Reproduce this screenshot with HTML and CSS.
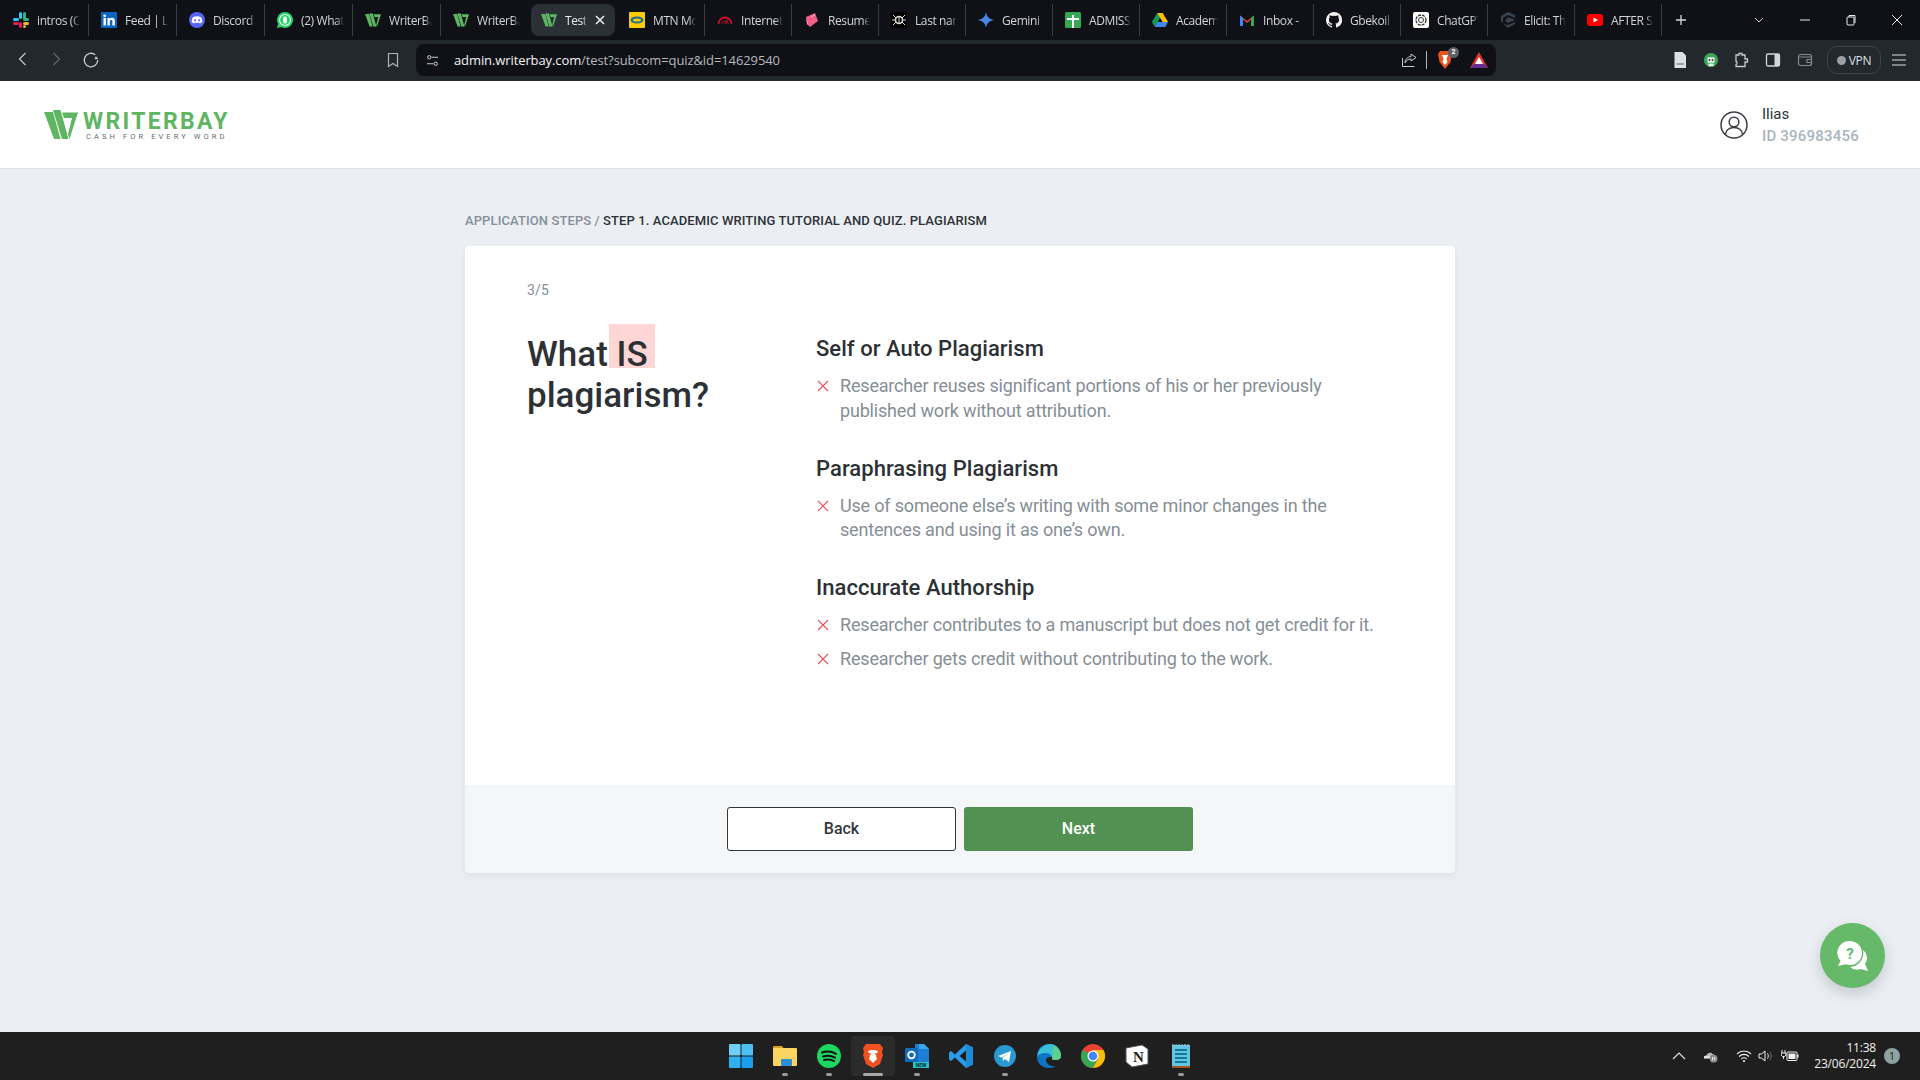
FILE: index.html
```html
<!DOCTYPE html>
<html lang="en">
<head>
    <meta charset="UTF-8">
    <title>Test</title>
    <link rel="stylesheet" href="styles.css">
</head>
<body>
    <svg class="defs" width="0" height="0">
        <symbol id="wb" viewBox="0 0 34 29">
            <polygon points="0,2 9,2 16.500,29 10,29" fill="#5fb662"/>
            <polygon points="9,0 16.500,0 24.500,29 18,29" fill="#5fb662"/>
            <polygon points="18,2.500 34,2.500 25.500,29 24,24 28,8 20,8" fill="#5fb662"/>
        </symbol>
    </svg>

    <!-- tab strip -->
    <div class="tabstrip">
        <div class="tab">
            <svg class="fav" viewBox="0 0 16 16"><rect x="6" y="0" width="3" height="7" rx="1.5" fill="#36c5f0"/><rect x="0" y="6" width="6" height="3" rx="1.5" fill="#36c5f0"/><rect x="10" y="0" width="3" height="7" rx="1.5" fill="#2eb67d"/><rect x="10" y="6" width="6" height="3" rx="1.5" fill="#2eb67d"/><rect x="0" y="10" width="6" height="3" rx="1.5" fill="#e01e5a"/><rect x="6" y="10" width="3" height="6" rx="1.5" fill="#e01e5a"/><rect x="10" y="10" width="6" height="3" rx="1.5" fill="#ecb22e"/><rect x="10" y="13" width="3" height="3" rx="1.5" fill="#ecb22e"/></svg>
            <span class="tab-title">intros (C</span>
        </div>
        <div class="tab">
            <svg class="fav" viewBox="0 0 16 16"><rect width="16" height="16" rx="1" fill="#0a66c2"/><rect x="2.5" y="6" width="2.4" height="7.5" fill="#fff"/><circle cx="3.7" cy="3.8" r="1.4" fill="#fff"/><path d="M6.5 6h2.3v1.1C9.3 6.300 10.200 5.800 11.200 5.800c2 0 2.600 1.300 2.600 3.200v4.500h-2.400V9.500c0-1-.3-1.600-1.200-1.600-1 0-1.400.7-1.400 1.700v3.900H6.500z" fill="#fff"/></svg>
            <span class="tab-title">Feed | Li</span>
        </div>
        <div class="tab">
            <svg class="fav" viewBox="0 0 16 16"><circle cx="8" cy="8" r="8" fill="#5865f2"/><path d="M4 5.200C6.500 4 9.500 4 12 5.200c1 1.600 1.400 3.300 1.300 5.100-.9.700-1.800 1.100-2.600 1.300l-.6-1c-1.400.4-2.800.4-4.200 0l-.6 1c-.8-.2-1.700-.6-2.600-1.300C2.600 8.500 3 6.800 4 5.200z" fill="#fff"/><circle cx="6" cy="8.300" r="1.100" fill="#5865f2"/><circle cx="10" cy="8.300" r="1.100" fill="#5865f2"/></svg>
            <span class="tab-title">Discord</span>
        </div>
        <div class="tab">
            <svg class="fav" viewBox="0 0 16 16"><path d="M8 0a8 8 0 0 1 0 16c-1.400 0-2.700-.4-3.800-1L0 16l1.100-4A8 8 0 0 1 8 0z" fill="#25d366"/><circle cx="8" cy="8" r="6" fill="#fff"/><circle cx="8" cy="8" r="5" fill="#25d366"/><rect x="6.200" y="4.500" width="3.600" height="7" rx="1.500" fill="#fff"/></svg>
            <span class="tab-title">(2) What</span>
        </div>
        <div class="tab">
            <svg class="fav" viewBox="0 0 34 29"><use href="#wb"/></svg>
            <span class="tab-title">WriterBa</span>
        </div>
        <div class="tab">
            <svg class="fav" viewBox="0 0 34 29"><use href="#wb"/></svg>
            <span class="tab-title">WriterBa</span>
        </div>
        <div class="tab tab-active">
            <svg class="fav" viewBox="0 0 34 29"><use href="#wb"/></svg>
            <span class="tab-title">Test</span>
            <svg class="tab-close" viewBox="0 0 10 10"><path d="M1 1l8 8M9 1l-8 8" stroke="#e8eaed" stroke-width="1.600"/></svg>
        </div>
        <div class="tab">
            <svg class="fav" viewBox="0 0 16 16"><rect width="16" height="16" rx="1" fill="#ffcb05"/><ellipse cx="8" cy="8" rx="6.500" ry="3.500" fill="#1b6b93"/><ellipse cx="8" cy="8" rx="4" ry="1.600" fill="#ffcb05"/></svg>
            <span class="tab-title">MTN Mo</span>
        </div>
        <div class="tab">
            <svg class="fav" viewBox="0 0 16 16"><path d="M1.500 12a6.500 6.500 0 0 1 13 0" fill="none" stroke="#c8102e" stroke-width="1.800"/><path d="M5 12a3 3 0 0 1 6 0" fill="none" stroke="#7a0d1e" stroke-width="1.500"/><path d="M8 12l2.500-4" stroke="#c8102e" stroke-width="1.200"/></svg>
            <span class="tab-title">Internet</span>
        </div>
        <div class="tab">
            <svg class="fav" viewBox="0 0 16 16"><path d="M2 5l9-4 3 8-8 6-3-3z" fill="#f45d85"/><path d="M6 15l-3-3-1-7 2 8z" fill="#d4d4d4"/><path d="M7 5l4-2" stroke="#ffb3c6"/></svg>
            <span class="tab-title">Resume</span>
        </div>
        <div class="tab">
            <svg class="fav" viewBox="0 0 16 16"><rect width="16" height="16" fill="#000"/><circle cx="8" cy="8" r="3.500" fill="none" stroke="#ddd" stroke-width="1.500"/><path d="M8 4v8M2 3l3 3M14 3l-3 3M1 8h3M15 8h-3M2 13l3-3M14 13l-3-3" stroke="#ddd"/></svg>
            <span class="tab-title">Last nan</span>
        </div>
        <div class="tab">
            <svg class="fav" viewBox="0 0 16 16"><path d="M8 0c.5 4.500 3 7 8 8-5 1-7.500 3.500-8 8-.5-4.500-3-7-8-8 5-1 7.500-3.500 8-8z" fill="#4a86e8"/></svg>
            <span class="tab-title">Gemini</span>
        </div>
        <div class="tab">
            <svg class="fav" viewBox="0 0 16 16"><rect width="16" height="16" rx="1.500" fill="#34a853"/><rect x="7" y="3" width="2" height="13" fill="#fff"/><rect x="2" y="6" width="12" height="2" fill="#fff"/></svg>
            <span class="tab-title">ADMISS</span>
        </div>
        <div class="tab">
            <svg class="fav" viewBox="0 0 16 16"><polygon points="5.300,1 10.700,1 5.500,10.300 2.800,14.800 0,10" fill="#0f9d58"/><polygon points="5.300,1 10.700,1 16,10 10.600,10" fill="#ffc107"/><polygon points="2.800,15 5.500,10 16,10 13.300,15" fill="#4285f4"/></svg>
            <span class="tab-title">Academ</span>
        </div>
        <div class="tab">
            <svg class="fav" viewBox="0 0 16 16"><path d="M1 14V3.500L8 9l7-5.500V14h-3V7.500L8 11 4 7.500V14z" fill="#ea4335"/><path d="M1 14V3.500l3 2.500v8z" fill="#4285f4"/><path d="M15 14V3.500l-3 2.500v8z" fill="#34a853"/></svg>
            <span class="tab-title">Inbox -</span>
        </div>
        <div class="tab">
            <svg class="fav" viewBox="0 0 16 16"><path d="M8 0a8 8 0 0 0-2.500 15.600c.4.100.5-.2.500-.4v-1.400c-2.200.5-2.700-1-2.700-1-.4-.9-.9-1.200-.9-1.200-.7-.5.100-.5.100-.5.800.100 1.200.8 1.200.8.700 1.200 1.900.9 2.300.7.100-.5.300-.9.500-1.100-1.800-.2-3.600-.9-3.600-4 0-.9.300-1.600.8-2.100-.1-.2-.4-1 .1-2.100 0 0 .7-.2 2.200.8a7.600 7.600 0 0 1 4 0c1.500-1 2.200-.8 2.200-.8.400 1.100.2 1.900.1 2.100.5.600.8 1.300.8 2.100 0 3.100-1.900 3.800-3.700 4 .3.300.6.800.6 1.500v2.200c0 .2.100.5.600.4A8 8 0 0 0 8 0z" fill="#f0f0f0"/></svg>
            <span class="tab-title">Gbekoil</span>
        </div>
        <div class="tab">
            <svg class="fav" viewBox="0 0 16 16"><rect width="16" height="16" rx="2" fill="#fff"/><circle cx="8" cy="8" r="5" fill="none" stroke="#333" stroke-width="1.300" stroke-dasharray="3 1"/><circle cx="8" cy="8" r="2.500" fill="none" stroke="#333"/></svg>
            <span class="tab-title">ChatGPT</span>
        </div>
        <div class="tab">
            <svg class="fav" viewBox="0 0 16 16"><polygon points="8,0 15,3 15,6 8,3 3,6 3,11 1,9 1,4" fill="#39424c"/><polygon points="8,5 15,8 8,11 5,9" fill="#39424c"/><polygon points="3,12 8,13 15,10 15,12 8,16" fill="#39424c"/></svg>
            <span class="tab-title">Elicit: Th</span>
        </div>
        <div class="tab">
            <svg class="fav" viewBox="0 0 16 16"><rect x="0" y="2" width="16" height="12" rx="3" fill="#f00"/><polygon points="6.500,5.500 11,8 6.500,10.500" fill="#fff"/></svg>
            <span class="tab-title">AFTER S</span>
        </div>
        <svg class="new-tab" viewBox="0 0 12 12"><path d="M6 1v10M1 6h10" stroke="#d5d8dc" stroke-width="1.300"/></svg>
        <div class="win-controls">
            <svg class="win-btn" viewBox="0 0 12 12"><path d="M2 4l4 4 4-4" fill="none" stroke="#c8cbd0"/></svg>
            <svg class="win-btn" viewBox="0 0 12 12"><path d="M1 6h10" stroke="#e8eaed"/></svg>
            <svg class="win-btn" viewBox="0 0 12 12"><rect x="2" y="3" width="7" height="8" rx="1" fill="none" stroke="#e8eaed"/><path d="M4 3V1.500h6V9" fill="none" stroke="#e8eaed"/></svg>
            <svg class="win-btn" viewBox="0 0 12 12"><path d="M1 1l10 10M11 1L1 11" stroke="#e8eaed"/></svg>
        </div>
    </div>

    <!-- toolbar -->
    <div class="toolbar">
        <div class="nav-group">
            <svg class="tool" viewBox="0 0 16 16"><path d="M10.500 2L4.500 8l6 6" fill="none" stroke="#c5c9cd" stroke-width="1.200"/></svg>
            <svg class="tool" viewBox="0 0 16 16"><path d="M5.500 2l6 6-6 6" fill="none" stroke="#62676c" stroke-width="1.200"/></svg>
            <svg class="tool" viewBox="0 0 16 16"><path d="M14 8a6 6 0 1 1-2.200-4.600" fill="none" stroke="#c5c9cd" stroke-width="1.200"/><path d="M14.500 7l-3.400.4 1.200-3z" fill="#c5c9cd"/></svg>
        </div>
        <svg class="tool bookmark" viewBox="0 0 16 16"><path d="M3.500 1.500h9v13L8 11.500l-4.500 3z" fill="none" stroke="#b0b4b8" stroke-width="1.200"/></svg>
        <div class="addressbar">
            <svg class="site-ic" viewBox="0 0 14 14"><circle cx="3.500" cy="3.500" r="1.800" fill="none" stroke="#d5d8dc"/><path d="M6 3.500h7M1 10.500h7" stroke="#d5d8dc"/><circle cx="10.500" cy="10.500" r="1.800" fill="none" stroke="#d5d8dc"/></svg>
            <span class="url"><b>admin.writerbay.com</b>/test?subcom=quiz&amp;id=14629540</span>
            <svg class="tool-s" viewBox="0 0 16 16"><path d="M9 2l5 3.500L9 9V7C6 7 4 8.500 3 11c0-4 2.500-6 6-6.500z" fill="none" stroke="#c5c9cd" transform="translate(1 0)"/><path d="M1.500 6v8.500h12" fill="none" stroke="#c5c9cd"/></svg>
            <span class="addr-sep"></span>
            <span class="brave-wrap">
                <svg class="brave-ic" viewBox="0 0 16 20"><path d="M3 1h10l2 3-1.500 8L8 19 2.500 12 1 4z" fill="#e8551f"/><path d="M5 5h6l-1.500 4 1 3L8 15l-2.500-3 1-3z" fill="#fff"/></svg>
                <span class="shield-count">2</span>
            </span>
            <svg class="tool-s bat" viewBox="0 0 18 16"><polygon points="9,0 18,16 0,16" fill="#e0362c"/><polygon points="0,16 18,16 14,12 4,12" fill="#662d91"/><polygon points="9,5 13,12 5,12" fill="#fff"/></svg>
        </div>
        <div class="ext-group">
            <svg class="tool-s" viewBox="0 0 16 16"><path d="M2.500 0h8L14 3.500V16H2.500z" fill="#dde0e3"/><rect x="4.500" y="11" width="7.500" height="2" fill="#9ca1a6"/></svg>
            <svg class="tool-s" viewBox="0 0 16 18"><circle cx="8" cy="9" r="8" fill="#3aa757"/><rect x="4" y="6" width="8" height="6" rx="1" fill="#e7eaed"/><circle cx="6.300" cy="9" r="1" fill="#333"/><circle cx="9.700" cy="9" r="1" fill="#333"/><rect x="5" y="13" width="6" height="3" fill="#e7eaed"/></svg>
            <svg class="tool-s" viewBox="0 0 16 16"><path d="M2 3h3V1.500h3V3h3v4h2.500v3H11v4.500H2v-2c1.500 0 1.500-3 0-3z" fill="none" stroke="#c5c9cd" stroke-width="1.300"/></svg>
            <svg class="tool-s" viewBox="0 0 16 16"><rect x="1.500" y="2" width="13" height="12" rx="1.500" fill="none" stroke="#d2d5d8" stroke-width="1.300"/><rect x="9.500" y="2" width="5" height="12" fill="#d2d5d8"/></svg>
            <svg class="tool-s wallet" viewBox="0 0 16 16"><rect x="1.500" y="2.500" width="13" height="11" rx="2" fill="none" stroke="#85898e" stroke-width="1.200"/><path d="M1.500 5h13M14 7.500h-4v3h4" fill="none" stroke="#85898e" stroke-width="1.200"/></svg>
            <div class="vpn"><span class="vpn-dot"></span>VPN</div>
            <svg class="tool-s" viewBox="0 0 16 16"><path d="M1 3h14M1 8h14M1 13h14" stroke="#9ca0a4" stroke-width="1.300"/></svg>
        </div>
    </div>

    <!-- site header -->
    <header class="site-header">
        <div class="logo">
            <svg class="logo-mark" viewBox="0 0 34 29"><use href="#wb"/></svg>
            <div class="logo-text">
                <div class="logo-name">WRITERBAY</div>
                <div class="logo-tag">CASH FOR EVERY WORD</div>
            </div>
        </div>
        <div class="user">
            <svg class="user-ic" viewBox="0 0 28 28"><circle cx="14" cy="14" r="13" fill="none" stroke="#3b3f44" stroke-width="1.500"/><circle cx="14" cy="11" r="4.800" fill="none" stroke="#3b3f44" stroke-width="1.500"/><path d="M5.500 23.500c0-4 3.500-7 8.500-7s8.500 3 8.500 7" fill="none" stroke="#3b3f44" stroke-width="1.500"/></svg>
            <div>
                <div class="user-name">Ilias</div>
                <div class="user-id">ID 396983456</div>
            </div>
        </div>
    </header>

    <main class="main">
        <div class="wrap">
            <div class="crumbs">APPLICATION STEPS / <span class="crumb-now">STEP 1. ACADEMIC WRITING TUTORIAL AND QUIZ. PLAGIARISM</span></div>
            <div class="card">
                <div class="card-body">
                    <div class="count">3/5</div>
                    <div class="columns">
                        <h1 class="question">What <span class="hl">IS</span> plagiarism?</h1>
                        <div class="answers">
                            <section class="group">
                                <h2>Self or Auto Plagiarism</h2>
                                <ul>
                                    <li><svg class="x" viewBox="0 0 12 12"><path d="M1 1l10 10M11 1L1 11" stroke="#e8505b" stroke-width="1.100"/></svg><span>Researcher reuses significant portions of his or her previously published work without attribution.</span></li>
                                </ul>
                            </section>
                            <section class="group">
                                <h2>Paraphrasing Plagiarism</h2>
                                <ul>
                                    <li><svg class="x" viewBox="0 0 12 12"><path d="M1 1l10 10M11 1L1 11" stroke="#e8505b" stroke-width="1.100"/></svg><span>Use of someone else’s writing with some minor changes in the sentences and using it as one’s own.</span></li>
                                </ul>
                            </section>
                            <section class="group">
                                <h2>Inaccurate Authorship</h2>
                                <ul>
                                    <li><svg class="x" viewBox="0 0 12 12"><path d="M1 1l10 10M11 1L1 11" stroke="#e8505b" stroke-width="1.100"/></svg><span>Researcher contributes to a manuscript but does not get credit for it.</span></li>
                                    <li><svg class="x" viewBox="0 0 12 12"><path d="M1 1l10 10M11 1L1 11" stroke="#e8505b" stroke-width="1.100"/></svg><span>Researcher gets credit without contributing to the work.</span></li>
                                </ul>
                            </section>
                        </div>
                    </div>
                </div>
                <div class="card-footer">
                    <button class="btn btn-back">Back</button>
                    <button class="btn btn-next">Next</button>
                </div>
            </div>
        </div>
        <div class="chat-btn">
            <svg viewBox="0 0 34 32" width="34" height="32"><path d="M14 1a12 12 0 0 1 0 24c-1.500 0-3-.3-4.300-.8L2 26l2.500-5A12 12 0 0 1 14 1z" fill="#fff"/><path d="M27 10a10 10 0 0 1 2 14l3 7-7-2a11 11 0 0 1-11-2 14 14 0 0 0 13-17z" fill="#fff"/><text x="14" y="18.500" class="chat-q">?</text></svg>
        </div>
    </main>

    <!-- windows taskbar -->
    <footer class="taskbar">
        <div class="task-icons">
            <span class="task"><svg viewBox="0 0 24 24"><rect x="0" y="0" width="11.500" height="11.500" rx="1" fill="#6fd0f7"/><rect x="12.500" y="0" width="11.500" height="11.500" rx="1" fill="#4cc0f5"/><rect x="0" y="12.500" width="11.500" height="11.500" rx="1" fill="#2fb0f2"/><rect x="12.500" y="12.500" width="11.500" height="11.500" rx="1" fill="#1aa0ee"/></svg></span>
            <span class="task running"><svg viewBox="0 0 24 24"><path d="M0 3a1 1 0 0 1 1-1h8l2 3h-11z" fill="#d9a01b"/><rect x="0" y="4" width="24" height="18" rx="1" fill="#fcd462"/><rect x="8" y="15" width="11" height="7" rx="1" fill="#2a8fd8"/></svg></span>
            <span class="task running"><svg viewBox="0 0 24 24"><circle cx="12" cy="12" r="12" fill="#1ed760"/><path d="M5 8.500c5-1.500 10-1 14 1.300M6 12.500c4-1.200 8.500-.8 12 1.200M7 16c3.500-1 7-.6 10 1" fill="none" stroke="#121212" stroke-width="2" stroke-linecap="round"/></svg></span>
            <span class="task task-on"><svg viewBox="0 0 24 24"><path d="M5 0h14l3 4-1 4 1 3-3 9-7 4-7-4-3-9 1-3-1-4z" fill="#f1501f"/><path d="M7 7l3-1h4l3 1-2 5 1 3-4 4-4-4 1-3z" fill="#fff"/><circle cx="9" cy="10" r="1" fill="#f1501f"/><circle cx="15" cy="10" r="1" fill="#f1501f"/></svg></span>
            <span class="task running"><svg viewBox="0 0 24 24"><path d="M10 0h9l5 5v13H10z" fill="#1c7ed6"/><path d="M14 0h5l5 5h-10z" fill="#38a7ea"/><rect x="0" y="4" width="13" height="14" rx="1" fill="#0f6cbd"/><circle cx="6.500" cy="11" r="3.300" fill="none" stroke="#fff" stroke-width="1.800"/><rect x="8" y="18" width="16" height="6" fill="#23c4c9"/><text x="16" y="23" class="task-new">NEW</text></svg></span>
            <span class="task"><svg viewBox="0 0 24 24"><path d="M17 0l7 3.500v17L17 24 6 13.500l-4 3.500-2-1.500V8.500L2 7l4 3.500z" fill="#2a9be8"/><path d="M17 6.500L10.500 12l6.500 5.500z" fill="#1e1e1e"/><path d="M17 0l7 3.500v17L17 24z" fill="#1f8ad6"/></svg></span>
            <span class="task running"><svg viewBox="0 0 24 24"><circle cx="12" cy="12" r="11" fill="#2a98d4"/><path d="M5 12l13-5-2 11-4-3-2 2-.5-3.500L16 9l-7.500 4.500z" fill="#fff"/></svg></span>
            <span class="task"><svg viewBox="0 0 24 24"><path d="M24 13C24 5 18 0 12 0 5 0 0 5 0 13c0 6 5 11 12 11 3 0 5-1 7-2-5 1-10-2-10-6 0-1 1-3 3-3h12z" fill="#0f74c4"/><path d="M0 13C1 5 7 0 13 0c7 0 11 6 11 12 0 3-3 4-6 4-2 0-3-1-3-1 1-3-2-6-6-6-4 0-8 1-9 4z" fill="#38c0d8"/><path d="M16 2c5 1 8 5 8 10 0 3-3 4-6 4-2 0-3-1-3-1 1-3 1-9 1-13z" fill="#5ed08c"/></svg></span>
            <span class="task"><svg viewBox="0 0 24 24"><circle cx="12" cy="12" r="12" fill="#ea4335"/><path d="M12 24A12 12 0 0 1 1.600 6L7 9l10 6z" fill="#34a853"/><path d="M12 6h10.400A12 12 0 0 1 12 24l5-9z" fill="#fbbc05"/><circle cx="12" cy="12" r="5.500" fill="#fff"/><circle cx="12" cy="12" r="4.300" fill="#4285f4"/></svg></span>
            <span class="task"><svg viewBox="0 0 24 24"><path d="M1 4l16-3 6 4v15l-16 3-6-5z" fill="#fff" stroke="#555" stroke-width="1"/><text x="13.500" y="18" class="task-n">N</text></svg></span>
            <span class="task running"><svg viewBox="0 0 24 24"><rect x="3" y="1" width="18" height="23" fill="#66c5de"/><rect x="3" y="22" width="18" height="2" fill="#a0561c"/><path d="M6 6h12M6 10h12M6 14h12M6 18h12" stroke="#14789e" stroke-width="2"/><path d="M4 0v2M7 0v2M10 0v2M13 0v2M16 0v2M19 0v2" stroke="#9ad9ea"/></svg></span>
        </div>
        <div class="tray">
            <svg class="tray-ic" viewBox="0 0 14 14"><path d="M1 10l6-6 6 6" fill="none" stroke="#e6e6e6" stroke-width="1.100"/></svg>
            <svg class="tray-ic cloud" viewBox="0 0 18 16"><path d="M1 10a3 3 0 0 1 3-3 4 4 0 0 1 7-1 3 3 0 0 1 3 3H2z" fill="#b7bbbe"/><rect x="1" y="8" width="7" height="3" fill="#ddd"/><circle cx="12" cy="11" r="4.500" fill="#85898c"/><path d="M10.800 9v4M13.200 9v4" stroke="#fff"/></svg>
            <svg class="tray-ic wifi" viewBox="0 0 16 14"><path d="M1 5c4-4 10-4 14 0M3 7.500c3-2.500 7-2.500 10 0M5.300 9.800c1.600-1.200 3.800-1.200 5.400 0" fill="none" stroke="#f0f0f0" stroke-width="1.100"/><circle cx="8" cy="12" r="1.100" fill="#f0f0f0"/></svg>
            <svg class="tray-ic vol" viewBox="0 0 16 14"><path d="M1 5h2.500L7 2v10L3.500 9H1z" fill="none" stroke="#f0f0f0"/><path d="M9.500 4.500c1 1.500 1 3.500 0 5" fill="none" stroke="#f0f0f0"/><path d="M12 3c1.500 2.500 1.500 5.500 0 8" fill="none" stroke="#707070"/></svg>
            <svg class="tray-ic batt" viewBox="0 0 18 14"><path d="M1 1v3M4 1v3M0 4h5v2l-1.500 1.500h-2L0 6zM2.500 7.500V10" fill="none" stroke="#f0f0f0"/><rect x="6" y="3" width="10" height="8.500" rx="1" fill="none" stroke="#f0f0f0"/><rect x="7.500" y="4.500" width="7" height="5.500" fill="#f0f0f0"/><rect x="16" y="5.500" width="1.500" height="3" fill="#f0f0f0"/></svg>
            <div class="clock"><div>11:38</div><div>23/06/2024</div></div>
            <span class="notif">1</span>
        </div>
    </footer>
</body>
</html>
```

FILE: styles.css
```css
* {
    box-sizing: border-box;
}

body {
    margin: 0;
    height: 1080px;
    overflow: hidden;
    display: flex;
    flex-direction: column;
    background: #ebeff3;
    font-family: Roboto, "Liberation Sans", sans-serif;
    color: #2d3136;
}

.defs {
    position: absolute;
}

/* tab strip */
.tabstrip {
    height: 40px;
    flex: none;
    display: flex;
    align-items: center;
    padding-left: 1px;
    background: #0f1116;
}

.tab {
    width: 87px;
    flex: none;
    height: 32px;
    display: flex;
    align-items: center;
    gap: 8px;
    padding: 0 8px 0 12px;
    border-right: 1px solid #3a3d42;
    font: 12px "Open Sans", sans-serif;
    color: #d2d4d7;
}

.tab:nth-child(-n+8) {
    width: 88px;
}

.tab:nth-child(6) {
    border-right-color: transparent;
}

.tab.tab-active {
    width: 84px;
    margin: 0 2px;
    padding: 0 6px 0 10px;
    background: #2a3035;
    border-right: none;
    border-radius: 8px;
    color: #e8eaed;
}

.fav {
    width: 16px;
    height: 16px;
    flex: none;
}

.tab-title {
    flex: 1;
    min-width: 0;
    overflow: hidden;
    white-space: nowrap;
    letter-spacing: -0.4px;
    -webkit-mask-image: linear-gradient(90deg, #000 82%, transparent);
    mask-image: linear-gradient(90deg, #000 82%, transparent);
}

.tab-close {
    width: 10px;
    height: 10px;
    flex: none;
    margin-right: 4px;
}

.new-tab {
    width: 12px;
    height: 12px;
    margin-left: 13px;
}

.win-controls {
    margin-left: auto;
    display: flex;
    align-items: center;
    gap: 34px;
    padding-right: 17px;
}

.win-btn {
    width: 12px;
    height: 12px;
}

/* toolbar */
.toolbar {
    height: 41px;
    flex: none;
    display: flex;
    align-items: center;
    padding: 0 0 1px 15px;
    background: #23282c;
}

.nav-group {
    display: flex;
    gap: 17px;
}

.nav-group .tool:last-child {
    width: 18px;
    height: 18px;
    margin-left: 1px;
}

.tool {
    width: 16px;
    height: 16px;
}

.tool-s {
    width: 16px;
    height: 16px;
    flex: none;
}

.bookmark {
    margin-left: 285px;
}

.addressbar {
    width: 1080px;
    height: 32px;
    margin-left: 15px;
    display: flex;
    align-items: center;
    padding: 0 8px 0 10px;
    border-radius: 8px;
    background: #0f1116;
}

.site-ic {
    width: 13px;
    height: 13px;
}

.url {
    flex: 1;
    margin-left: 15px;
    font: 13px "Open Sans", sans-serif;
    letter-spacing: -0.1px;
    color: #b5b9bd;
}

.url b {
    font-weight: 400;
    color: #f2f3f4;
}

.addr-sep {
    width: 1px;
    height: 18px;
    margin: 0 10px 0 9px;
    background: #b0b4b8;
}

.brave-wrap {
    position: relative;
    display: flex;
}

.brave-ic {
    width: 16px;
    height: 20px;
}

.shield-count {
    position: absolute;
    top: -3px;
    right: -6px;
    width: 11px;
    height: 11px;
    border-radius: 50%;
    background: #5d6168;
    color: #fff;
    font: bold 7px/11px Roboto, sans-serif;
    text-align: center;
}

.bat {
    margin-left: 17px;
    width: 18px;
}

.ext-group {
    margin-left: 176px;
    display: flex;
    align-items: center;
    gap: 15px;
}

.wallet {
    margin-left: 1px;
}

.vpn {
    width: 54px;
    height: 28px;
    margin: 0 -5px 0 -1px;
    display: flex;
    align-items: center;
    justify-content: center;
    gap: 3px;
    border: 1px solid #3d4348;
    border-radius: 10px;
    font: 12px "Open Sans", sans-serif;
    letter-spacing: -0.3px;
    color: #dfe1e3;
}

.vpn-dot {
    width: 9px;
    height: 9px;
    border-radius: 50%;
    background: #9ba0a5;
}

/* site header */
.site-header {
    height: 88px;
    flex: none;
    display: flex;
    align-items: center;
    justify-content: space-between;
    padding: 0 47px 0 44px;
    background: #fff;
    border-bottom: 1px solid #dde1e5;
}

.logo {
    display: flex;
    align-items: center;
    gap: 5px;
}

.logo-mark {
    width: 34px;
    height: 29px;
}

.logo-text {
    margin-top: 3px;
}

.logo-name {
    font: 700 23px/19px Roboto, sans-serif;
    letter-spacing: 2.300px;
    color: #5fb662;
}

.logo-tag {
    margin: 2px 0 0 3px;
    font: 400 7.500px/8px Roboto, sans-serif;
    letter-spacing: 3.100px;
    color: #666a6e;
    white-space: nowrap;
}

.user {
    display: flex;
    align-items: center;
    gap: 14px;
    width: 153px;
}

.user-ic {
    width: 28px;
    height: 28px;
    flex: none;
}

.user-name {
    font-size: 15px;
    line-height: 22px;
    color: #2d3136;
}

.user-id {
    font-size: 15px;
    font-weight: 500;
    line-height: 22px;
    letter-spacing: 0.2px;
    color: #a9b4be;
}

/* page body */
.main {
    flex: 1;
    position: relative;
}

.wrap {
    width: 990px;
    margin: 0 auto;
    padding-top: 44px;
}

.crumbs {
    font-size: 13px;
    font-weight: 500;
    line-height: 16px;
    letter-spacing: 0.1px;
    color: #868e96;
    margin-bottom: 17px;
}

.crumb-now {
    color: #2d3136;
}

.card {
    border-radius: 4px;
    overflow: hidden;
    background: #fff;
    box-shadow: 0 2px 6px rgba(60, 70, 80, 0.08);
}

.card-body {
    height: 539px;
    padding: 35px 62px 0;
}

.count {
    font-size: 14px;
    line-height: 18px;
    letter-spacing: 0.2px;
    color: #868e96;
}

.columns {
    display: flex;
    margin-top: 20px;
}

.question {
    width: 289px;
    flex: none;
    margin: 15px 0 0;
    font-size: 35px;
    font-weight: 500;
    line-height: 41px;
    color: #2d3136;
}

.hl {
    display: inline-block;
    height: 44px;
    margin: -10px 0 -2px -7px;
    padding: 10px 7px 0;
    background: #ffd6d6;
}

.answers {
    flex: 1;
    margin-top: 16px;
}

.group {
    margin-bottom: 31.500px;
}

.group h2 {
    margin: 0 0 11px;
    font-size: 22px;
    font-weight: 500;
    line-height: 28px;
    letter-spacing: 0.05px;
    color: #2d3136;
}

.group ul {
    margin: 0;
    padding: 0;
    list-style: none;
}

.group li {
    display: flex;
    margin-bottom: 9px;
    font-size: 18px;
    line-height: 24.500px;
    letter-spacing: -0.18px;
    color: #868e96;
}

.x {
    width: 12px;
    height: 12px;
    flex: none;
    margin: 6px 11px 0 1px;
}

.card-footer {
    height: 88px;
    display: flex;
    justify-content: center;
    align-items: center;
    gap: 8px;
    background: #f5f6f8;
}

.btn {
    width: 229px;
    height: 44px;
    padding-bottom: 2px;
    border-radius: 3px;
    font-family: Roboto, sans-serif;
    font-size: 16px;
    font-weight: 500;
}

.btn-back {
    background: #fff;
    border: 1px solid #33373c;
    color: #33373c;
}

.btn-next {
    background: #529152;
    border: none;
    color: #fff;
}

.chat-btn {
    position: absolute;
    right: 35px;
    bottom: 44px;
    width: 65px;
    height: 65px;
    display: flex;
    align-items: center;
    justify-content: center;
    border-radius: 50%;
    background: #66b969;
    box-shadow: 0 6px 14px rgba(60, 70, 80, 0.22);
}

.chat-q {
    font: 700 15px Roboto, sans-serif;
    fill: #66b969;
    text-anchor: middle;
}

/* taskbar */
.taskbar {
    height: 48px;
    flex: none;
    position: relative;
    display: flex;
    align-items: center;
    justify-content: flex-end;
    background: #1f1f1f;
}

.task-icons {
    position: absolute;
    left: 719px;
    top: 4px;
    display: flex;
}

.task {
    width: 44px;
    height: 40px;
    display: flex;
    align-items: center;
    justify-content: center;
    position: relative;
}

.task svg {
    width: 24px;
    height: 24px;
}

.task.running::after,
.task-on::after {
    content: "";
    position: absolute;
    bottom: 0;
    left: 19px;
    width: 6px;
    height: 3px;
    border-radius: 2px;
    background: #9b9b9b;
}

.task-on {
    border-radius: 4px;
    background: #2b2b2b;
}

.task-on::after {
    left: 12px;
    width: 20px;
    background: #a8a8a8;
}

.task-new {
    font: bold 5px Roboto, sans-serif;
    fill: #0b2b33;
    text-anchor: middle;
}

.task-n {
    font: bold 15px "Liberation Serif", serif;
    fill: #222;
    text-anchor: middle;
}

.tray {
    display: flex;
    align-items: center;
    padding-right: 20px;
    color: #f0f0f0;
}

.tray-ic {
    width: 14px;
    height: 14px;
    margin-right: 16px;
}

.cloud {
    width: 18px;
    margin-right: 16px;
}

.wifi {
    width: 16px;
    margin-right: 6px;
}

.vol {
    width: 16px;
    margin-right: 7px;
}

.batt {
    width: 18px;
    margin-right: 0;
}

.clock {
    width: 77px;
    font: 12px/16px "Open Sans", sans-serif;
    letter-spacing: -0.2px;
    text-align: right;
}

.notif {
    width: 16px;
    height: 16px;
    margin-left: 8px;
    border-radius: 50%;
    background: #8fa3a0;
    color: #1f1f1f;
    font: 11px/16px "Open Sans", sans-serif;
    text-align: center;
}
```
